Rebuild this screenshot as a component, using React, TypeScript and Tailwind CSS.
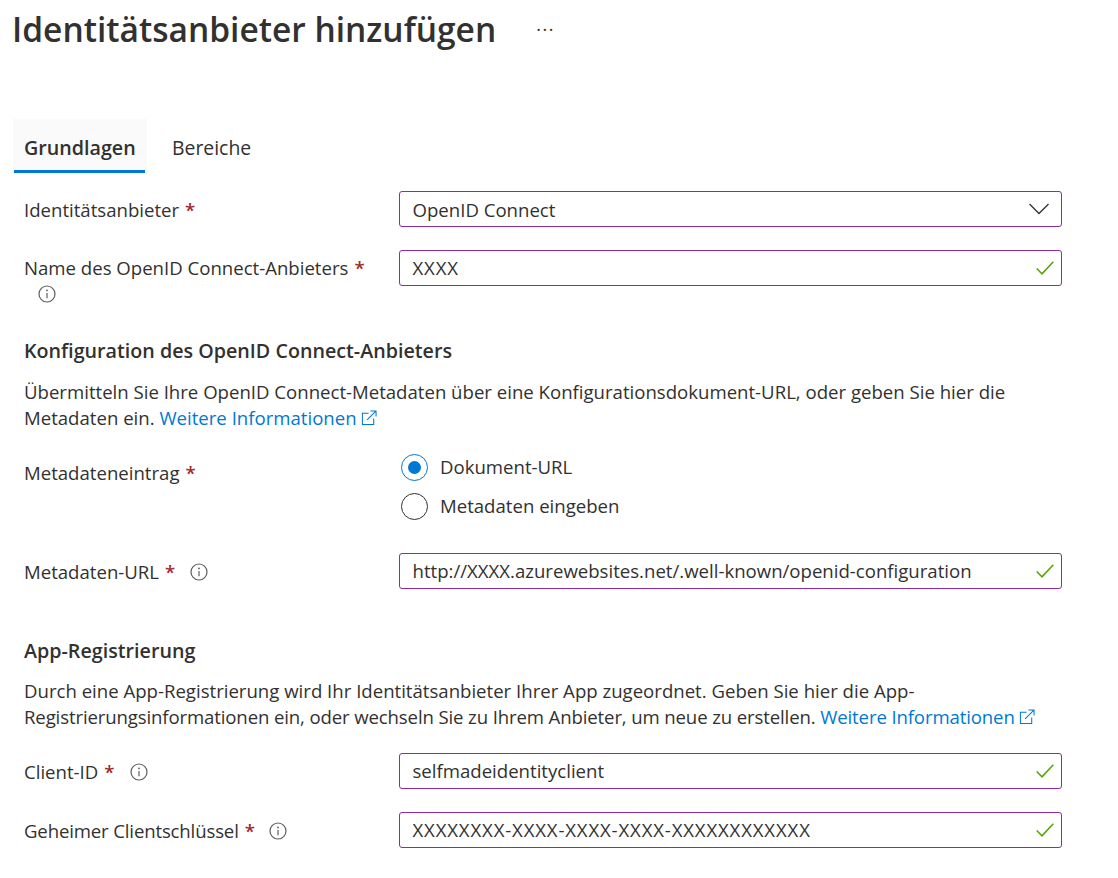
import type { ReactNode } from "react"

const font = { fontFamily: "'Open Sans', 'Noto Sans', sans-serif" }

function Check() {
  return (
    <svg width="18" height="14" viewBox="0 0 18 14" className="shrink-0" fill="none">
      <path d="M0.7 7.5 L6 12.8 L17.3 0.7" stroke="#57a300" strokeWidth="1.5" />
    </svg>
  )
}

function Info() {
  return (
    <svg width="18" height="18" viewBox="0 0 18 18" fill="none" className="shrink-0">
      <circle cx="9" cy="9" r="8" stroke="#605e5c" strokeWidth="1.2" />
      <path d="M9 8v5.2" stroke="#605e5c" strokeWidth="1.2" />
      <circle cx="9" cy="5.4" r="0.9" fill="#605e5c" />
    </svg>
  )
}

function ExternalLink() {
  return (
    <svg width="16" height="16" viewBox="0 0 17 17" fill="none" className="inline-block ml-[4px] align-[-1px]">
      <path d="M8 3.5H1.5V15.5H13.5V9" stroke="#0078d4" strokeWidth="1.1" />
      <path d="M6.5 10.5L15.5 1.5M10 1H16V7" stroke="#0078d4" strokeWidth="1.1" />
    </svg>
  )
}

function Star() {
  return <span className="text-[#a4262c] ml-[6px] font-semibold">*</span>
}

function Field({ value, chevron, wide }: { value: string; chevron?: boolean; wide?: boolean }) {
  return (
    <div className={`w-[663px] h-[36px] border-[1.5px] border-[#8a2da5] rounded-[3px] flex items-center justify-between pl-[12.5px] text-[#323130] ${chevron ? "pr-[12px]" : "pr-[7.5px]"}`}>
      <span className={`${wide ? "tracking-[0.85px]" : ""} ${chevron ? "pt-[1px]" : ""}`}>{value}</span>
      {chevron ? (
        <svg width="20" height="12" viewBox="0 0 20 12" fill="none">
          <path d="M0.5 1 L10 10.5 L19.5 1" stroke="#323130" strokeWidth="1.3" />
        </svg>
      ) : (
        <Check />
      )}
    </div>
  )
}

function Row({ label, children, className }: { label: ReactNode; children: ReactNode; className?: string }) {
  return (
    <div className={`flex items-start ${className ?? ""}`}>
      <div className="w-[375px] pt-[6px] text-[#323130]">{label}</div>
      {children}
    </div>
  )
}

function Radio({ label, checked }: { label: string; checked?: boolean }) {
  return (
    <div className="flex items-center gap-[12px] h-[28px] ml-[2px]">
      <span
        className={`w-[27px] h-[27px] rounded-full border-[1.5px] flex items-center justify-center ${
          checked ? "border-[#0078d4]" : "border-[#323130]"
        }`}
      >
        {checked && <span className="w-[13px] h-[13px] rounded-full bg-[#0078d4]" />}
      </span>
      <span>{label}</span>
    </div>
  )
}

export default function App() {
  return (
    <div className="w-[1118px] h-[878px] bg-white text-[#323130] text-[18.6px] leading-[26px] overflow-hidden" style={font}>
      <div className="flex items-start pl-[12px] pt-[5px]">
        <h1 className="text-[33.5px] leading-[48px] font-semibold">Identitätsanbieter hinzufügen</h1>
        <span className="ml-[40px] mt-[12px] text-[18px] leading-[24px] tracking-[1.5px]">···</span>
      </div>

      <div className="flex items-start mt-[66px] ml-[14px]">
        <div className="w-[134px] h-[54px] bg-[#fafafa] -ml-[1px] flex flex-col">
          <div className="h-[51px] pt-[16px] pl-[11px] font-semibold text-[19.7px]">Grundlagen</div>
          <div className="h-[3px] ml-[1px] mr-[2px] bg-[#0078d4]" />
        </div>
        <div className="pl-[25px] pt-[16px] text-[19.4px]">Bereiche</div>
      </div>

      <div className="pl-[24px]">
        <Row label={<>Identitätsanbieter<Star /></>} className="mt-[18px]">
          <Field value="OpenID Connect" chevron />
        </Row>

        <Row
          label={
            <div className="-mt-[1px]">
              <div>Name des OpenID Connect-Anbieters<Star /></div>
              <div className="ml-[14px] mt-[4px]"><Info /></div>
            </div>
          }
          className="mt-[23px] h-[57px]"
        >
          <Field value="XXXX" wide />
        </Row>

        <h2 className="font-semibold text-[19.7px] mt-[31px]">Konfiguration des OpenID Connect-Anbieters</h2>
        <p className="mt-[15px]">
          <span className="block">Übermitteln Sie Ihre OpenID Connect-Metadaten über eine Konfigurationsdokument-URL, oder geben Sie hier die</span>
          <span className="block">
            Metadaten ein. <a className="text-[#0078d4]">Weitere Informationen<ExternalLink /></a>
          </span>
        </p>

        <div className="flex items-start mt-[22px]">
          <div className="w-[375px] pt-[7px]">Metadateneintrag<Star /></div>
          <div className="flex flex-col gap-[11px]">
            <Radio label="Dokument-URL" checked />
            <Radio label="Metadaten eingeben" />
          </div>
        </div>

        <Row
          label={
            <span className="flex items-center">
              <span>Metadaten-URL<Star /></span>
              <span className="ml-[15px]"><Info /></span>
            </span>
          }
          className="mt-[33px]"
        >
          <Field value="http://XXXX.azurewebsites.net/.well-known/openid-configuration" />
        </Row>

        <h2 className="font-semibold text-[19.7px] mt-[49px]">App-Registrierung</h2>
        <p className="mt-[14px]">
          <span className="block">Durch eine App-Registrierung wird Ihr Identitätsanbieter Ihrer App zugeordnet. Geben Sie hier die App-</span>
          <span className="block tracking-[-0.13px]">
            Registrierungsinformationen ein, oder wechseln Sie zu Ihrem Anbieter, um neue zu erstellen. <a className="text-[#0078d4]">Weitere Informationen<ExternalLink /></a>
          </span>
        </p>

        <Row
          label={
            <span className="flex items-center">
              <span>Client-ID<Star /></span>
              <span className="ml-[16px]"><Info /></span>
            </span>
          }
          className="mt-[23px]"
        >
          <Field value="selfmadeidentityclient" />
        </Row>

        <Row
          label={
            <span className="flex items-center">
              <span className="tracking-[-0.15px]">Geheimer Clientschlüssel<Star /></span>
              <span className="ml-[14px]"><Info /></span>
            </span>
          }
          className="mt-[23px]"
        >
          <Field value="XXXXXXXX-XXXX-XXXX-XXXX-XXXXXXXXXXXX" wide />
        </Row>
      </div>
    </div>
  )
}
